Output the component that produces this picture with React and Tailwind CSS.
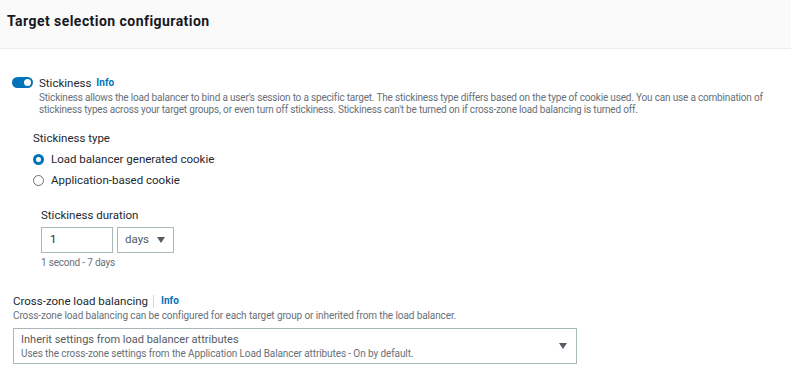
export default function App() {
  return (
    <div className="w-[791px] h-[387px] bg-white overflow-hidden text-[#16191f]" style={{ fontFamily: "Roboto, 'Noto Sans', sans-serif" }}>
      <div className="h-[49px] bg-[#fafafa] border-b border-[#eaeded] px-[7px] pt-[12px]">
        <h2 className="text-[14px] leading-[18px] font-bold tracking-[0.45px]">Target selection configuration</h2>
      </div>

      <div className="pl-[12px] pt-[27px]">
        <div className="flex">
          <div className="shrink-0 mt-[1px] h-[11px] w-[21px] rounded-full bg-[#0073bb] flex items-center justify-end pr-[2px]">
            <span className="h-[7px] w-[7px] rounded-full bg-white" />
          </div>
          <div className="ml-[6px] flex-1">
            <div className="flex items-center text-[11.5px] leading-[14px] text-[#232830]">
              <span>Stickiness</span>
              <span className="ml-[5px] text-[10px] font-bold text-[#0073bb]">Info</span>
            </div>
            <p className="mt-[2px] text-[10px] leading-[12px] tracking-[-0.18px] text-[#687078] whitespace-nowrap">
              Stickiness allows the load balancer to bind a user's session to a specific target. The stickiness type differs based on the type of cookie used. You can use a combination of
              <br />
              stickiness types across your target groups, or even turn off stickiness. Stickiness can't be turned on if cross-zone load balancing is turned off.
            </p>
          </div>
        </div>

        <div className="pl-[21px] mt-[15px] text-[#232830]">
          <div className="text-[11.5px] leading-[14px]">Stickiness type</div>
          <label className="mt-[7px] flex items-center text-[11.5px] leading-[14px]">
            <span className="shrink-0 h-[11px] w-[11px] rounded-full border-[3px] border-[#0073bb] bg-white" />
            <span className="ml-[7px]">Load balancer generated cookie</span>
          </label>
          <label className="mt-[7px] flex items-center text-[11.5px] leading-[14px]">
            <span className="shrink-0 h-[11px] w-[11px] rounded-full border border-[#687078] bg-white" />
            <span className="ml-[7px]">Application-based cookie</span>
          </label>

          <div className="pl-[8px] mt-[21px]">
            <div className="text-[11.5px] leading-[14px]">Stickiness duration</div>
            <div className="mt-[5px] flex gap-[4px]">
              <div className="h-[26px] w-[72px] border border-[#aab7b8] px-[8px] flex items-center text-[11.5px]">1</div>
              <div className="h-[26px] w-[57px] border border-[#aab7b8] pl-[7px] pr-[8px] flex items-center justify-between text-[11.5px] text-[#545b64]">
                <span>days</span>
                <svg width="8" height="6" viewBox="0 0 8 6"><path d="M0 0h8L4 6z" fill="#545b64" /></svg>
              </div>
            </div>
            <div className="mt-[4px] text-[10px] leading-[12px] tracking-[-0.2px] text-[#687078]">1 second - 7 days</div>
          </div>
        </div>

        <div className="mt-[25px] pl-[1px]">
          <div className="flex items-center text-[11.5px] leading-[14px] text-[#232830]">
            <span>Cross-zone load balancing</span>
            <span className="ml-[5px] h-[13px] w-px bg-[#d5dbdb]" />
            <span className="ml-[7px] text-[10px] font-bold text-[#0073bb]">Info</span>
          </div>
          <p className="mt-[2px] text-[10px] leading-[12px] tracking-[-0.1px] text-[#687078]">
            Cross-zone load balancing can be configured for each target group or inherited from the load balancer.
          </p>
          <div className="mt-[6px] h-[36px] w-[564px] border border-[#aab7b8] pl-[7px] pr-[9px] flex items-center justify-between">
            <div>
              <div className="text-[11px] leading-[14px] text-[#545b64]">Inherit settings from load balancer attributes</div>
              <div className="mt-[1px] text-[10px] leading-[12px] tracking-[-0.1px] text-[#687078]">Uses the cross-zone settings from the Application Load Balancer attributes - On by default.</div>
            </div>
            <svg width="8" height="6" viewBox="0 0 8 6"><path d="M0 0h8L4 6z" fill="#545b64" /></svg>
          </div>
        </div>
      </div>
    </div>
  );
}
